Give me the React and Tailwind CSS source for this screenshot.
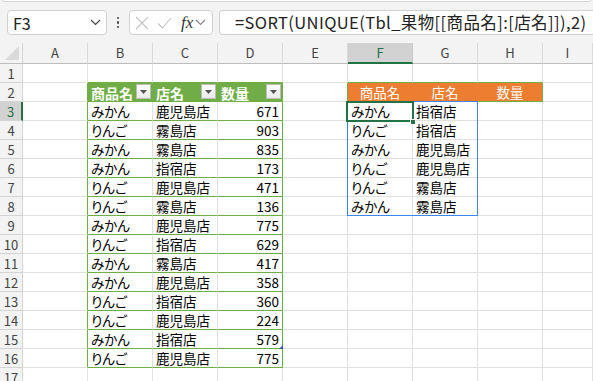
import React from 'react';

const COLS = ['A', 'B', 'C', 'D', 'E', 'F', 'G', 'H', 'I'];

const TABLE = [
  ['みかん', '鹿児島店', 671],
  ['りんご', '霧島店', 903],
  ['みかん', '霧島店', 835],
  ['みかん', '指宿店', 173],
  ['りんご', '鹿児島店', 471],
  ['りんご', '霧島店', 136],
  ['みかん', '鹿児島店', 775],
  ['りんご', '指宿店', 629],
  ['みかん', '霧島店', 417],
  ['みかん', '鹿児島店', 358],
  ['りんご', '指宿店', 360],
  ['りんご', '鹿児島店', 224],
  ['みかん', '指宿店', 579],
  ['りんご', '鹿児島店', 775],
];

const SPILL = [
  ['みかん', '指宿店'],
  ['りんご', '指宿店'],
  ['みかん', '鹿児島店'],
  ['りんご', '鹿児島店'],
  ['りんご', '霧島店'],
  ['みかん', '霧島店'],
];

// text of a cell at row r (1-based), column c (0 = A)
const cellText = (r, c) => {
  if (r === 2 && c === 1) return '商品名';
  if (r === 2 && c === 2) return '店名';
  if (r === 2 && c === 3) return '数量';
  if (r === 2 && c === 5) return '商品名';
  if (r === 2 && c === 6) return '店名';
  if (r === 2 && c === 7) return '数量';
  if (r >= 3 && r <= 16 && c >= 1 && c <= 3) return TABLE[r - 3][c - 1];
  if (r >= 3 && r <= 8 && (c === 5 || c === 6)) return SPILL[r - 3][c - 5];
  return '';
};

const FilterButton = () => (
  <span className="absolute right-[1px] top-[1px] w-[15px] h-[15px] bg-gradient-to-b from-[#fdfdfd] to-[#ebebeb] border border-[#bcbcbc] flex items-center justify-center">
    <svg width="7" height="4" viewBox="0 0 7 4">
      <path d="M0 0h7L3.5 4z" fill="#555" />
    </svg>
  </span>
);

const Cell = ({ r, c }) => {
  const inTable = c >= 1 && c <= 3 && r >= 2 && r <= 16;
  const tableHead = inTable && r === 2;
  const orangeHead = r === 2 && c >= 5 && c <= 7;

  const width = c === 8 ? 'w-[50px]' : 'w-[65px]';

  let rightB = 'border-r-[#e1e1e1]';
  if ((c === 0 || c === 3) && r >= 2 && r <= 16) rightB = 'border-r-[#70ad47]';
  if (tableHead && c < 3) rightB = 'border-r-[#70ad47]';
  if (r === 2 && (c === 4 || c === 7)) rightB = 'border-r-[#70ad47]';
  if (r === 2 && (c === 5 || c === 6)) rightB = 'border-r-[#ed7d31]';

  let bottomB = 'border-b-[#e1e1e1]';
  if (inTable) bottomB = 'border-b-[#70ad47]';
  if (r === 1 && ((c >= 1 && c <= 3) || (c >= 5 && c <= 7))) bottomB = 'border-b-[#70ad47]';
  if (orangeHead) bottomB = 'border-b-[#70ad47]';

  let bg = 'bg-white';
  if (tableHead) bg = 'bg-[#70ad47]';
  if (orangeHead) bg = 'bg-[#ed7d31]';

  let text = 'text-black justify-start';
  if (tableHead) text = 'text-white font-bold justify-start text-[14px]';
  if (orangeHead) text = 'text-white justify-center';
  if (c === 3 && r >= 3) text = 'text-black justify-end';

  const value = cellText(r, c);

  return (
    <div
      className={`relative h-[19px] shrink-0 border-r border-b flex items-center px-[3px] pt-[1px] text-[13.5px] leading-none whitespace-nowrap ${width} ${rightB} ${bottomB} ${bg} ${text}`}
    >
      {value}
      {tableHead && <FilterButton />}
    </div>
  );
};

const Chevron = ({ color = '#444' }) => (
  <svg width="11" height="7" viewBox="0 0 11 7" fill="none">
    <path d="M1 1l4.5 4.5L10 1" stroke={color} strokeWidth="1.2" />
  </svg>
);

const FormulaBar = () => (
  <div className="h-[43px] bg-[#f3f3f3] shrink-0">
    <div className="mx-[2px] h-[2px] bg-white border-b border-x border-[#d4d4d4] rounded-b-[6px]" />
    <div className="flex items-center h-[25px] mt-[8px] pl-[7px]">
      <div className="w-[100px] h-full bg-white border border-[#d1d1d1] rounded-[4px] flex items-center justify-between pl-[5px] pr-[5px]">
        <span className="text-[16px] text-[#222] leading-none">F3</span>
        <Chevron />
      </div>
      <div className="w-[22px] flex flex-col items-center gap-[2px]">
        <span className="w-[2.5px] h-[2.5px] bg-[#444] rounded-full" />
        <span className="w-[2.5px] h-[2.5px] bg-[#444] rounded-full" />
        <span className="w-[2.5px] h-[2.5px] bg-[#444] rounded-full" />
      </div>
      <div className="w-[84px] h-full bg-white border border-[#d1d1d1] rounded-[4px] flex items-center pl-[5px]">
        <svg width="14" height="14" viewBox="0 0 14 14" fill="none" className="mr-[8px]">
          <path d="M1 1l12 12M13 1L1 13" stroke="#c4c4c4" strokeWidth="1.1" />
        </svg>
        <svg width="15" height="12" viewBox="0 0 15 12" fill="none" className="mr-[9px]">
          <path d="M1 6.5l4.5 4.5L14 1" stroke="#c4c4c4" strokeWidth="1.1" />
        </svg>
        <span className="font-['Liberation_Serif',serif] italic text-[17px] text-[#333] leading-none mr-[2px]">fx</span>
        <Chevron color="#888" />
      </div>
      <div className="ml-[6px] flex-1 h-full bg-white border border-[#d1d1d1] rounded-l-[4px] border-r-0 flex items-center pl-[15px] overflow-hidden whitespace-nowrap">
        <span className="text-[16.5px] text-[#222] leading-none tracking-[0.4px]">
          =SORT(UNIQUE(Tbl_果物[[商品名]:[店名]]),2)
        </span>
      </div>
    </div>
  </div>
);

const ColumnHeaders = () => (
  <div className="flex h-[21px] bg-[#f3f3f3] shrink-0">
    <div className="w-[23px] h-full shrink-0 border-r border-b border-r-[#d4d4d4] border-b-[#bdbdbd] relative">
      <svg width="16" height="16" viewBox="0 0 16 16" className="absolute left-[4px] top-[2px]">
        <path d="M15 1v14H1z" fill="#dadada" />
      </svg>
    </div>
    {COLS.map((col, i) =>
      col === 'F' ? (
        <div
          key={col}
          className="w-[65px] h-full shrink-0 border-r border-b-2 border-r-[#c8c8c8] border-b-[#217346] bg-[#d2d2d2] flex items-center justify-center text-[13px] text-[#217346]"
        >
          {col}
        </div>
      ) : (
        <div
          key={col}
          className={`${i === 8 ? 'w-[50px]' : 'w-[65px]'} h-full shrink-0 border-r border-b border-r-[#dadada] border-b-[#bdbdbd] flex items-center justify-center text-[13px] text-[#444]`}
        >
          {col}
        </div>
      )
    )}
  </div>
);

const RowHeader = ({ r }) =>
  r === 3 ? (
    <div className="w-[23px] h-[19px] shrink-0 border-r-2 border-b border-r-[#217346] border-b-[#d4d4d4] bg-[#d2d2d2] flex items-center justify-center text-[13px] text-[#217346] pt-[1px]">
      {r}
    </div>
  ) : (
    <div className="w-[23px] h-[19px] shrink-0 border-r border-b border-r-[#d4d4d4] border-b-[#d4d4d4] bg-[#f3f3f3] flex items-center justify-center text-[13px] text-[#444] pt-[1px]">
      {r}
    </div>
  );

const rows = Array.from({ length: 17 }, (_, i) => i + 1);

export default function App() {
  return (
    <div className="w-[593px] h-[381px] overflow-hidden bg-white flex flex-col font-['Noto_Sans_CJK_JP','Noto_Sans',sans-serif] [font-feature-settings:'palt']">
      <FormulaBar />
      <ColumnHeaders />
      <div className="relative">
        {rows.map((r) => (
          <div key={r} className="flex">
            <RowHeader r={r} />
            {COLS.map((col, c) => (
              <Cell key={col} r={r} c={c} />
            ))}
          </div>
        ))}

        {/* spill range F3:G8 */}
        <div className="absolute left-[347px] top-[37px] w-[131px] h-[115px] border border-solid border-[#3d85f0] pointer-events-none" />
        {/* active cell F3 */}
        <div className="absolute left-[346px] top-[37px] w-[68px] h-[21px] border-2 border-[#217346] pointer-events-none" />
        <div className="absolute left-[410px] top-[55px] w-[6px] h-[6px] bg-[#217346] border border-white pointer-events-none" />
        {/* table resize handle D16 */}
        <svg width="4" height="4" viewBox="0 0 4 4" className="absolute left-[279px] top-[281px]">
          <path d="M4 0v4H0z" fill="#2b5fb4" />
        </svg>
      </div>
    </div>
  );
}
